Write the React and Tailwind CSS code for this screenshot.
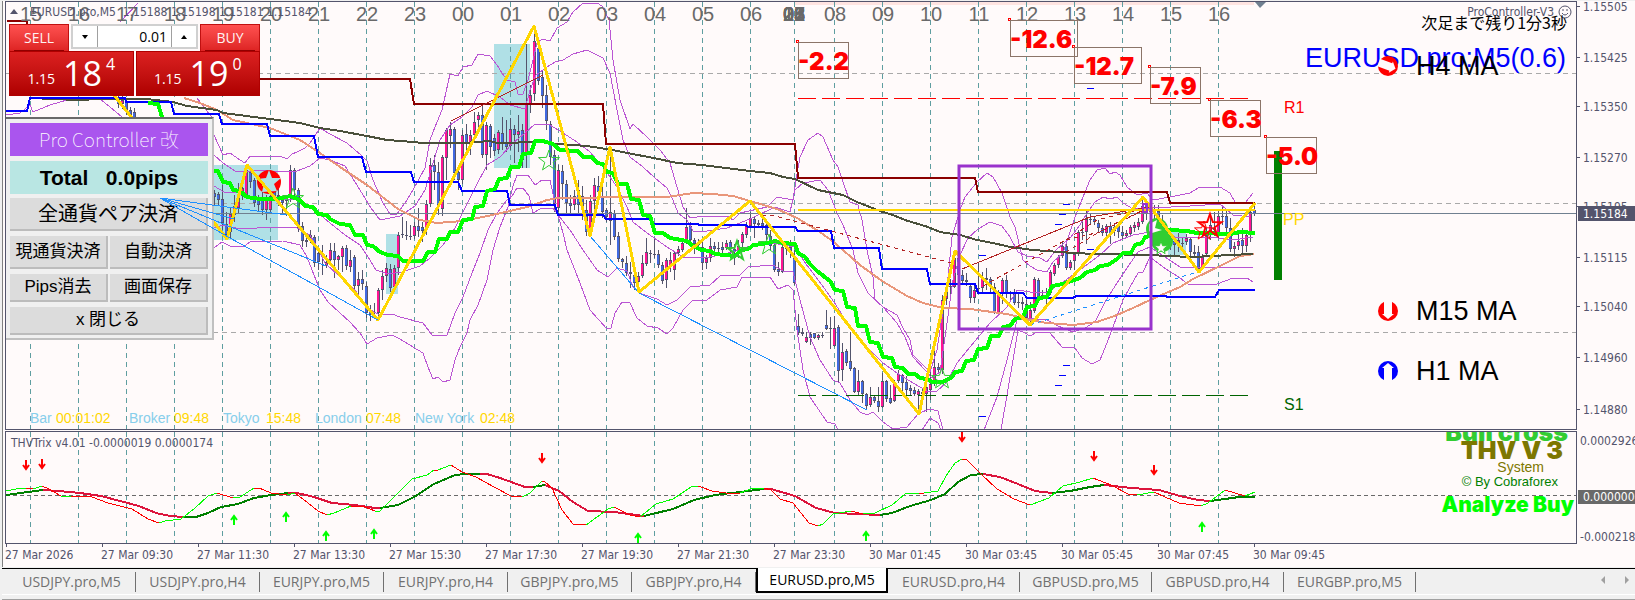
import React, { useState } from "react";

const INK = "#54546c";

const hours = [
  "15", "16", "17", "18", "19", "20", "21", "22", "23",
  "00", "01", "02", "03", "04", "05", "06",
].map((label, i) => ({ label, x: 30 + i * 48 }));
const lateHours = [
  "08", "09", "10", "11", "12", "13", "14", "15", "16",
].map((label, i) => ({ label, x: 834 + i * 48 }));
const gridX = [...hours.map((h) => h.x), 794, ...lateHours.map((h) => h.x)];

// one bar every 4px: [high, open, close, low]
const earlyBars = [
  [95, 98, 104, 108], [96, 104, 100, 109], [98, 102, 110, 115], [107, 110, 117, 120], [108, 112, 122, 126],
];
const bars = [
  [190, 193, 197, 205], [192, 194, 200, 206], [185, 199, 223, 230], [212, 224, 235, 238],
  [208, 232, 214, 238], [195, 215, 206, 222], [183, 208, 195, 214], [178, 196, 188, 200],
  [165, 196, 170, 198], [170, 172, 182, 188], [178, 180, 203, 207], [195, 197, 205, 212],
  [190, 198, 210, 215], [195, 210, 198, 220], [185, 210, 196, 212], [180, 190, 196, 200],
  [184, 195, 197, 206], [198, 200, 203, 215], [195, 201, 200, 216], [165, 198, 170, 202],
  [168, 170, 190, 196], [188, 190, 228, 232], [222, 226, 241, 247], [235, 242, 240, 247],
  [230, 235, 237, 243], [235, 237, 263, 267], [250, 253, 262, 270], [245, 257, 255, 275],
  [255, 265, 262, 268], [243, 260, 250, 264], [243, 251, 260, 278], [255, 260, 256, 270],
  [246, 257, 248, 272], [245, 248, 266, 270], [250, 267, 260, 272], [255, 257, 286, 290],
  [272, 286, 279, 296], [270, 279, 284, 290], [282, 286, 313, 318], [305, 311, 315, 321],
  [303, 312, 312, 317], [288, 313, 290, 316], [270, 290, 276, 300], [263, 276, 268, 282],
  [264, 269, 288, 292], [265, 287, 268, 290], [232, 268, 235, 275], [217, 234, 235, 238],
  [221, 235, 236, 240], [225, 236, 237, 240], [222, 236, 226, 239], [208, 226, 231, 237],
  [222, 227, 231, 242], [200, 229, 204, 235], [158, 204, 165, 207], [155, 165, 172, 190],
  [162, 172, 205, 215], [155, 209, 157, 216], [128, 158, 130, 180], [122, 136, 129, 148],
  [127, 129, 173, 180], [165, 172, 180, 190], [130, 180, 135, 184], [124, 134, 143, 150],
  [130, 143, 135, 155], [112, 135, 122, 140], [112, 120, 115, 128], [105, 115, 155, 158],
  [122, 155, 125, 170], [124, 126, 147, 158], [134, 138, 151, 156], [130, 150, 132, 154],
  [117, 133, 143, 150], [120, 142, 147, 152], [118, 146, 129, 150], [125, 129, 135, 163],
  [115, 135, 131, 152], [124, 130, 160, 168], [44, 155, 104, 168], [85, 104, 95, 113],
  [30, 94, 41, 101], [38, 48, 81, 85], [70, 77, 96, 108], [85, 95, 121, 130],
  [121, 124, 157, 165], [150, 155, 204, 212], [165, 208, 170, 212], [165, 171, 184, 200],
  [180, 184, 203, 215], [195, 203, 206, 216], [190, 205, 196, 210], [180, 190, 205, 213],
  [186, 196, 210, 220], [200, 210, 232, 236], [195, 232, 201, 236], [178, 201, 185, 210],
  [176, 186, 192, 205], [182, 196, 212, 218], [208, 210, 217, 222], [152, 221, 212, 245],
  [210, 213, 237, 240], [232, 236, 259, 262], [258, 259, 262, 268], [256, 263, 273, 276],
  [262, 272, 274, 288], [265, 275, 283, 290], [272, 282, 276, 284], [255, 276, 263, 278],
  [238, 264, 252, 266], [250, 253, 254, 263], [238, 254, 255, 258], [250, 254, 265, 268],
  [262, 265, 281, 284], [258, 280, 260, 288], [252, 267, 260, 272], [252, 270, 253, 280],
  [246, 253, 249, 256], [240, 250, 243, 252], [208, 241, 227, 244], [222, 226, 240, 245],
  [238, 240, 244, 254], [239, 243, 245, 250], [240, 247, 263, 270], [255, 263, 258, 269],
  [238, 258, 246, 262], [242, 246, 249, 252], [242, 248, 248, 254], [242, 247, 250, 255],
  [240, 248, 243, 250], [240, 242, 249, 255], [244, 249, 252, 265], [240, 252, 246, 258],
  [232, 243, 234, 250], [222, 235, 226, 238], [212, 226, 218, 228], [217, 219, 224, 238],
  [220, 223, 225, 228], [218, 223, 226, 230], [222, 225, 235, 240], [230, 236, 246, 250],
  [242, 245, 270, 272], [262, 269, 272, 276], [245, 272, 247, 273], [244, 246, 249, 255],
  [240, 247, 252, 258], [250, 258, 283, 285], [314, 326, 333, 335], [328, 332, 334, 336],
  [332, 342, 337, 343], [332, 334, 338, 345], [333, 333, 338, 339], [334, 338, 335, 340],
  [332, 336, 335, 338], [310, 325, 329, 330], [317, 328, 329, 349], [316, 346, 328, 347],
  [325, 327, 371, 382], [343, 370, 352, 381], [349, 351, 363, 366], [332, 361, 369, 371],
  [367, 368, 392, 393], [370, 392, 381, 395], [380, 381, 394, 403], [393, 394, 406, 410],
  [387, 405, 397, 407], [396, 397, 401, 403], [387, 401, 407, 412], [373, 407, 381, 408],
  [380, 381, 399, 402], [385, 398, 403, 404], [380, 401, 382, 402], [370, 381, 374, 383],
  [374, 375, 383, 392], [376, 382, 390, 399], [385, 388, 391, 395], [387, 390, 394, 396],
  [389, 395, 391, 413], [388, 394, 392, 396], [380, 394, 387, 412], [372, 390, 384, 400],
  [350, 381, 367, 386], [363, 367, 370, 374], [295, 370, 300, 374], [284, 299, 287, 305],
  [279, 287, 286, 297], [253, 287, 258, 288], [255, 258, 275, 280], [270, 275, 281, 284],
  [273, 280, 282, 286], [284, 286, 298, 303], [285, 298, 290, 303], [262, 288, 289, 291],
  [272, 288, 277, 292], [268, 278, 280, 290], [277, 279, 286, 294], [283, 287, 313, 314],
  [290, 314, 293, 316], [278, 293, 280, 304], [275, 280, 293, 298], [291, 292, 294, 302],
  [289, 294, 303, 305], [294, 302, 303, 308], [297, 302, 304, 310], [300, 304, 318, 320],
  [302, 320, 310, 325], [277, 311, 279, 313], [278, 280, 297, 298], [290, 295, 296, 300],
  [288, 296, 295, 305], [270, 293, 272, 295], [263, 274, 265, 276], [255, 265, 257, 268],
  [242, 256, 246, 258], [240, 246, 268, 270], [260, 268, 262, 270], [253, 261, 254, 270],
  [230, 254, 232, 256], [220, 232, 232, 240], [210, 232, 219, 244], [213, 219, 220, 224],
  [216, 219, 222, 225], [220, 223, 228, 232], [225, 228, 233, 236], [224, 233, 226, 238],
  [222, 226, 235, 244], [225, 231, 227, 236], [224, 226, 232, 238], [226, 232, 236, 240],
  [230, 236, 233, 238], [225, 234, 227, 236], [222, 228, 225, 232], [218, 227, 222, 230],
  [198, 222, 206, 224], [200, 203, 208, 220], [206, 208, 212, 218], [205, 212, 209, 228],
  [205, 211, 222, 230], [215, 222, 235, 240], [230, 234, 240, 248], [232, 240, 244, 250],
  [236, 241, 245, 255], [233, 245, 240, 252], [238, 244, 243, 248], [234, 242, 238, 245],
  [238, 239, 252, 256], [245, 252, 254, 258], [246, 252, 269, 272], [254, 268, 257, 270],
  [228, 254, 235, 256], [215, 235, 225, 240], [212, 228, 230, 235], [210, 234, 216, 238],
  [205, 216, 217, 225], [210, 216, 228, 232], [218, 228, 249, 252], [242, 249, 246, 257],
  [230, 246, 241, 250], [228, 240, 246, 254], [230, 246, 235, 252], [206, 235, 212, 242],
  [205, 210, 214, 216],
];

const bands = [
  "214,135 223,155 230,153 240,160 245,163 250,156 280,156 287,159 292,154 297,152 305,148 310,143 320,128 328,133 347,143 362,156 367,161 373,180 383,203 390,214 397,214 407,200 413,190 425,168 430,140 435,127 442,110 450,74 458,76 463,67 472,65 478,54 490,56 497,65 502,73 507,80 515,82 518,94 523,94 528,80 533,60 537,43 542,39 550,41 557,28 567,22 573,12 583,3 597,3 602,6 609,20 613,60 620,100 630,129 633,124 647,137 660,150 670,163 677,187 683,207 690,218 697,217 727,216 733,220 740,213 767,207 777,197 793,200 796,180 800,157 808,140 818,133 823,137 833,160 838,167 843,182 850,202 858,205 862,220 867,250 873,277 875,300 883,307 897,315 903,328 910,340 913,355 923,365 930,372 937,350 943,310 948,277 952,237 960,210 965,197 977,182 987,173 993,177 1002,193 1010,217 1015,227 1023,260 1030,266 1037,270 1047,272 1053,262 1063,253 1070,232 1075,217 1083,197 1090,180 1097,170 1105,168 1110,174 1115,172 1120,175 1127,187 1137,195 1147,193 1153,200 1170,197 1190,193 1198,188 1220,187 1230,193 1235,202 1245,203 1253,193",
  "214,155 223,163 235,171 247,172 262,170 280,172 297,171 310,166 320,158 330,160 345,166 360,190 371,208 380,220 390,218 400,216 415,206 425,190 440,140 450,125 462,117 472,107 478,95 487,91 500,97 510,105 525,109 530,90 536,75 547,67 555,62 563,60 573,54 587,50 603,58 610,73 617,110 623,140 630,157 643,167 655,178 667,188 673,200 678,213 687,220 693,231 707,231 727,228 750,219 775,207 790,212 795,190 803,183 820,180 828,190 837,213 843,225 853,250 858,273 868,293 883,307 897,323 905,337 913,357 925,370 932,378 940,372 946,330 953,280 960,255 968,238 978,229 990,222 1002,226 1010,237 1018,252 1027,256 1040,258 1047,262 1056,250 1070,238 1080,225 1087,213 1095,202 1103,197 1110,199 1117,197 1123,203 1133,209 1153,208 1190,206 1220,204 1233,215 1250,217",
  "214,186 224,192 240,193 260,201 280,200 297,199 312,208 330,223 345,235 360,245 368,257 376,270 388,274 402,272 420,266 430,258 443,245 455,228 463,212 475,188 487,165 500,157 513,143 525,133 535,124 550,125 563,133 577,142 590,152 603,167 617,187 627,207 633,222 647,233 667,247 683,257 710,257 733,252 753,245 773,243 795,247 806,264 822,285 836,305 847,323 863,343 883,363 897,373 913,383 927,391 937,391 947,382 957,363 970,347 980,335 990,323 1007,307 1017,290 1030,292 1047,292 1063,282 1080,270 1100,255 1113,243 1133,235 1150,232 1180,238 1210,237 1233,240 1253,237",
  "214,228 223,225 240,229 257,228 283,227 297,228 310,235 317,247 325,263 340,277 355,290 367,308 378,314 392,314 400,317 423,323 432,335 447,335 455,313 463,297 472,273 480,253 488,230 497,213 507,200 512,196 517,188 523,188 529,196 533,213 540,209 553,208 562,220 570,230 583,250 597,270 608,277 617,268 627,271 633,287 639,293 657,299 667,305 677,300 690,287 710,285 720,276 740,275 748,267 773,265 783,271 793,272 800,300 810,337 820,360 833,380 840,383 850,400 860,412 867,415 873,412 883,422 893,429 907,427 919,413 930,409 938,411 943,430",
  "214,248 222,242 230,246 243,247 250,242 283,241 300,245 307,257 312,270 320,290 328,302 340,313 350,322 360,333 367,344 377,338 392,335 400,339 413,347 423,353 428,367 433,379 438,377 443,382 450,380 455,360 460,347 467,333 470,320 478,305 487,280 493,250 500,227 508,207 513,186 517,175 528,175 535,185 542,180 550,180 556,208 563,233 567,250 580,283 590,310 607,329 611,328 615,313 622,302 630,303 637,318 647,326 658,328 667,334 673,328 683,310 693,300 707,300 720,290 737,287 742,277 770,277 778,289 788,285 793,290 797,330 803,370 810,397 827,422 835,424 838,430",
  "922,430 930,418 938,423 941,430",
  "984,430 997,397 1007,360 1017,320 1027,318 1047,320 1058,326 1073,332 1085,328 1095,322 1105,302 1117,283 1127,268 1138,252 1150,247 1165,257 1180,267 1210,268 1233,267 1253,268",
  "1001,430 1013,360 1018,330 1025,333 1030,336 1037,332 1050,333 1062,347 1075,348 1082,358 1092,364 1100,360 1105,348 1113,327 1123,300 1130,287 1138,273 1143,272 1150,257 1163,267 1180,278 1188,284 1217,284 1233,278 1247,278 1253,282",
  "6,115 20,113 30,105 33,112 50,105 67,100 78,98",
  "100,99 110,107 122,117",
  "120,22 138,3",
  "197,98 206,110 214,120",
];

const lime =
  "148,103 158,104 162,117 214,171 218,171 223,182 230,183 233,190 240,191 247,197 260,199 277,199 290,196 300,200 305,206 313,207 318,214 327,215 330,219 340,224 350,225 355,235 363,235 367,245 373,246 380,252 388,255 398,256 403,261 423,261 428,252 435,252 439,239 447,239 450,232 458,232 463,220 472,219 475,207 483,206 487,191 495,189 499,179 507,178 511,167 519,167 523,154 531,153 535,141 543,141 553,144 560,150 578,151 583,157 592,157 597,163 603,164 607,172 613,173 618,184 627,184 631,199 639,200 643,215 650,216 655,233 663,233 670,238 687,241 693,246 702,250 710,251 715,254 735,256 740,251 750,248 753,245 763,244 775,241 783,243 795,244 798,253 805,257 810,264 817,271 830,281 835,290 843,291 847,307 855,308 858,326 866,326 870,342 878,343 883,357 892,358 895,367 903,368 908,374 915,374 920,378 927,379 932,382 943,382 952,377 955,372 962,371 966,361 974,360 978,349 987,348 991,336 999,336 1003,327 1010,326 1015,319 1023,317 1027,307 1035,306 1039,298 1047,297 1052,286 1063,284 1068,282 1080,278 1087,272 1095,270 1100,266 1108,265 1117,259 1123,253 1131,253 1135,245 1142,243 1145,237 1150,236 1153,232 1170,230 1187,231 1197,233 1230,234 1240,232 1255,233";

const salmon =
  "184,98 200,103 217,110 233,120 270,128 300,140 320,153 340,167 367,185 398,209 420,220 437,223 462,221 483,217 510,211 527,207 547,200 558,198 587,198 613,197 667,197 693,193 713,194 733,196 750,201 777,209 797,218 820,232 835,243 860,265 882,281 907,296 923,303 943,308 970,309 1007,314 1030,320 1047,323 1073,325 1097,322 1117,315 1133,308 1150,300 1180,287 1193,279 1220,266 1240,256 1254,254";

const olive =
  "30,98 78,100 100,99 147,99 173,102 187,106 217,110 223,113 270,119 300,123 320,128 340,131 367,136 387,140 414,142 422,143 463,143 490,141 497,143 540,142 558,144 587,146 613,150 627,153 654,158 677,163 702,165 750,171 770,173 783,177 795,179 818,190 843,195 857,202 880,211 893,215 905,220 928,227 940,232 960,235 977,240 993,243 1010,247 1033,250 1073,253 1097,254 1150,255 1167,256 1193,257 1230,255 1253,254";

const blue =
  "6,111 27,111 30,98 125,98 126,102 171,102 174,114 219,114 222,124 267,124 270,136 314,136 318,157 362,157 366,172 411,172 414,182 458,182 462,191 507,191 510,205 555,205 558,215 603,215 606,219 651,219 654,224 698,224 699,225 746,225 748,227 795,227 798,231 831,231 834,248 879,248 882,269 927,269 930,284 975,284 978,293 1023,293 1027,298 1073,298 1076,296 1165,296 1168,297 1215,297 1219,290 1255,290";

const maroon =
  "7,21 27,21 31,79 410,79 414,104 603,104 606,144 795,144 798,178 975,178 978,192 1167,192 1170,203 1255,203";

const zigzag =
  "110,90 227,239 247,165 378,320 534,26 590,236 610,147 639,292 750,201 919,414 955,251 1030,325 1143,197 1199,272 1255,203";

const pips = [
  { text: "-2.2", x: 798, y: 42, w: 51 },
  { text: "-12.6", x: 1010, y: 20, w: 68 },
  { text: "-12.7", x: 1074, y: 47, w: 68 },
  { text: "-7.9", x: 1150, y: 67, w: 51 },
  { text: "-6.3", x: 1210, y: 100, w: 51 },
  { text: "-5.0", x: 1266, y: 137, w: 51 },
];

const levelMarks = [
  [1087, 88], [1063, 204], [1059, 214], [1055, 224], [979, 255],
  [1087, 249], [1063, 365], [1059, 375], [1055, 385], [979, 416],
];

const sessions = [
  { name: "Bar", time: "00:01:02", x: 30, tx: 56 },
  { name: "Broker", time: "09:48", x: 129, tx: 174 },
  { name: "Tokyo", time: "15:48", x: 223, tx: 266 },
  { name: "London", time: "07:48", x: 315, tx: 366 },
  { name: "New York", time: "02:48", x: 415, tx: 480 },
];

const prices = [
  ["1.15505", 6], ["1.15425", 57], ["1.15350", 106], ["1.15270", 157], ["1.15195", 206],
  ["1.15115", 257], ["1.15040", 306], ["1.14960", 357], ["1.14880", 409],
];

// slow trix, alternating falling / rising pieces
const slowTrix = [
  ["#008000", "6,495 43,490"],
  ["#dc143c", "43,490 59,491 80,493 101,496 120,501 139,506 156,513 170,516 184,517"],
  ["#008000", "184,517 196,517 208,513 221,507 238,504 254,498 271,495 288,493"],
  ["#dc143c", "288,493 297,493 314,497 332,503 354,505 375,508 380,508"],
  ["#008000", "380,508 398,505 414,497 434,484 455,475 466,474 480,474"],
  ["#dc143c", "480,474 487,474 500,478 525,487 533,487"],
  ["#008000", "533,487 545,485"],
  ["#dc143c", "545,485 559,491 573,502 588,511 614,512 644,516"],
  ["#008000", "644,516 673,509 694,500 715,495 740,492 764,489"],
  ["#dc143c", "764,489 771,489 795,496 816,508 835,513 858,514 880,515"],
  ["#008000", "880,515 892,513 910,506 931,500 945,494 958,482 971,475 983,474"],
  ["#dc143c", "983,474 1000,477 1018,484 1035,491 1052,493"],
  ["#008000", "1052,493 1070,491 1090,487 1104,485"],
  ["#dc143c", "1104,485 1132,488 1159,490 1180,496 1198,500 1210,501"],
  ["#008000", "1210,501 1225,499 1239,497 1255,497"],
];

const fastTrix = [
  ["#00ff00", "6,491 16,489 26,488"],
  ["#ff0000", "26,488 33,489"],
  ["#00ff00", "33,489 42,486"],
  ["#ff0000", "42,486 49,489 61,496"],
  ["#00ff00", "61,496 71,496"],
  ["#ff0000", "71,496 92,497 108,503 132,509 148,519 159,523"],
  ["#00ff00", "159,523 165,521 181,519 195,508 208,496 217,493"],
  ["#ff0000", "217,493 233,498"],
  ["#00ff00", "233,498 240,497 254,488"],
  ["#ff0000", "254,488 259,488 271,493 287,495"],
  ["#00ff00", "287,495 295,493"],
  ["#ff0000", "295,493 308,503 318,511 327,515"],
  ["#00ff00", "327,515 334,513 351,506"],
  ["#ff0000", "351,506 365,507 375,511"],
  ["#00ff00", "375,511 380,511 396,495 412,479 427,475 434,470"],
  ["#ff0000", "434,470 438,470"],
  ["#00ff00", "438,470 451,465"],
  ["#ff0000", "451,465 462,472 476,477 494,487 511,496 522,497"],
  ["#00ff00", "522,497 530,493 542,481"],
  ["#ff0000", "542,481 545,482 552,488 562,510 573,524 586,525"],
  ["#00ff00", "586,525 597,517 608,509 614,507"],
  ["#ff0000", "614,507 630,515 640,517"],
  ["#00ff00", "640,517 656,504 673,499 691,487 698,486"],
  ["#ff0000", "698,486 712,491 726,493 740,493"],
  ["#00ff00", "740,493 753,488 764,488"],
  ["#ff0000", "764,488 771,490 780,499 793,503 809,523 818,526"],
  ["#00ff00", "818,526 823,524 833,514 851,511"],
  ["#ff0000", "851,511 863,514"],
  ["#00ff00", "863,514 875,513 892,505 905,494 919,493"],
  ["#ff0000", "919,493 924,493"],
  ["#00ff00", "924,493 938,491 946,476 955,463 962,459"],
  ["#ff0000", "962,459 967,460 981,474 997,489 1014,499 1030,505"],
  ["#00ff00", "1030,505 1049,498 1063,486 1080,482 1093,478"],
  ["#ff0000", "1093,478 1111,485 1128,494 1137,495"],
  ["#00ff00", "1137,495 1154,492"],
  ["#ff0000", "1154,492 1165,497 1179,503 1201,506"],
  ["#00ff00", "1201,506 1208,503 1225,490"],
  ["#ff0000", "1225,490 1245,496"],
  ["#00ff00", "1245,496 1255,492"],
];

const sellArrows = [[26, 465], [42, 464], [542, 458], [962, 437], [1094, 456], [1154, 470]];
const buyArrows = [[234, 520], [286, 517], [326, 536], [374, 534], [638, 538], [866, 536], [1202, 527]];

const dates = [
  "27 Mar 2026", "27 Mar 09:30", "27 Mar 11:30", "27 Mar 13:30", "27 Mar 15:30",
  "27 Mar 17:30", "27 Mar 19:30", "27 Mar 21:30", "27 Mar 23:30", "30 Mar 01:45",
  "30 Mar 03:45", "30 Mar 05:45", "30 Mar 07:45", "30 Mar 09:45",
];

const tabs = [
  { name: "USDJPY.pro,M5", width: "w-32" },
  { name: "USDJPY.pro,H4", width: "w-31" },
  { name: "EURJPY.pro,M5", width: "w-31" },
  { name: "EURJPY.pro,H4", width: "w-31" },
  { name: "GBPJPY.pro,M5", width: "w-31" },
  { name: "GBPJPY.pro,H4", width: "w-31" },
  { name: "EURUSD.pro,M5", width: "w-33" },
  { name: "EURUSD.pro,H4", width: "w-33" },
  { name: "GBPUSD.pro,M5", width: "w-33" },
  { name: "GBPUSD.pro,H4", width: "w-33" },
  { name: "EURGBP.pro,M5", width: "w-33" },
];

function starPoints(cx, cy, r) {
  return Array.from({ length: 10 }, (_, i) => {
    const a = (Math.PI / 5) * i - Math.PI / 2;
    const d = i % 2 ? r * 0.4 : r;
    return `${(cx + d * Math.cos(a)).toFixed(1)},${(cy + d * Math.sin(a)).toFixed(1)}`;
  }).join(" ");
}

function Star({ x, y, r = 11, color = "#32cd32", fill = "none", width = 1 }) {
  return <polygon points={starPoints(x, y, r)} fill={fill} stroke={color} strokeWidth={width} />;
}

function Line({ points, color, width = 1, dash }) {
  return (
    <polyline
      points={points}
      fill="none"
      stroke={color}
      strokeWidth={width}
      strokeDasharray={dash}
      strokeLinejoin="round"
    />
  );
}

function Bar({ x, bar }) {
  const [high, open, close, low] = bar;
  const up = close < open;
  const top = Math.min(open, close);
  const size = Math.abs(open - close);
  return (
    <g>
      <rect x={x} y={high} width="1" height={low - high} fill={INK} />
      <rect x={x - 1} y={top} width="3" height={Math.max(size, 1)} fill={INK} />
      {size > 2 && (
        <rect x={x - 1} y={top + 1} width="2" height={size - 2} fill={up ? "#ff1493" : "#4169e1"} />
      )}
    </g>
  );
}

function Arrow({ x, y, up }) {
  return (
    <path
      d={up ? "M0 5V-4M-3 0L0 -4L3 0" : "M0 -5V4M-3 0L0 4L3 0"}
      transform={`translate(${x} ${y})`}
      fill="none"
      stroke={up ? "#00ff00" : "#ff0000"}
      strokeWidth="2"
    />
  );
}

function TrendDot({ color, angle }) {
  return (
    <svg className="h-5 w-5 shrink-0" viewBox="-10 -10 20 20">
      <circle r="10" fill={color} />
      <path d="M-4 -10V3H-6L0 8L6 3H4V-10Z" fill="#fffafa" transform={`rotate(${angle})`} />
    </svg>
  );
}

function PriceChart() {
  return (
    <svg className="block h-full w-full" role="img" aria-label="EURUSD.pro M5 price chart">
      <g transform="translate(-6 -2)">
        <rect x="795" y="2" width="459" height="3" fill="#ffe4e1" />
        <g fill="#b0e0e6">
          <rect x="214" y="165" width="64" height="75" />
          <rect x="386" y="234" width="12" height="60" />
          <rect x="494" y="44" width="36" height="124" />
          <rect x="1168" y="232" width="18" height="23" />
        </g>
        <g shapeRendering="crispEdges">
          {gridX.map((x) => (
            <line key={x} x1={x + 0.5} x2={x + 0.5} y1="2" y2="430" stroke="#5f9ea0" strokeDasharray="5 4" />
          ))}
          {[73, 203, 332].map((y) => (
            <line key={y} x1="6" x2="1576" y1={y + 0.5} y2={y + 0.5} stroke="#a9a9a9" strokeDasharray="5 4" />
          ))}
          {earlyBars.map((bar, i) => (
            <Bar key={i} x={118 + i * 4} bar={bar} />
          ))}
          {bars.map((bar, i) => (
            <Bar key={i} x={214 + i * 4} bar={bar} />
          ))}
          {bands.map((points) => (
            <Line key={points} points={points} color="#ba55d3" />
          ))}
        </g>
        <rect x="1274" y="151" width="8" height="129" fill="#008000" />
        <rect x="6" y="213" width="1570" height="1" fill="#708090" />
        <g shapeRendering="crispEdges">
          <Line points={salmon} color="#e9967a" width={2} />
          <Line points={olive} color="#4a4f3a" width={2} />
          <Line points={blue} color="#0000ff" width={2} />
          <Line points={maroon} color="#8b0000" width={2} />
          <Line points={lime} color="#00ff00" width={4} />
          <Line points="798,98.5 1248,98.5" color="#ff0000" dash="18 6" />
          <Line points="798,395.5 1248,395.5" color="#006400" dash="18 6" />
          <Line points="590,236 639,293 867,410" color="#1e90ff" />
          <Line points="1030,325 1197,272" color="#1e90ff" dash="4 4" />
          <Line points="451,121 543,75" color="#b22222" />
          <Line points="962,269 1090,217 1150,207" color="#b22222" />
          <Line points="762,215 775,216 955,264" color="#b22222" dash="4 4" />
          <Line points="983,286 1066,240 1097,220 1150,207" color="#b22222" dash="4 4" />
          <Line points="1066,252 1106,228 1150,207" color="#b22222" dash="4 4" />
          <Line points="1066,240 1100,232 1150,207" color="#b22222" dash="4 4" />
          <Line points="798,210 1255,210" color="#ffd700" width={2} />
        </g>
        <Star x={293} y={199} />
        <Star x={549} y={161} />
        <Star x={737} y={251} width={2} r={10} />
        <Star x={769} y={245} />
        <Star x={942} y={379} />
        <circle cx="1157" cy="229" r="11" fill="#32cd32" />
        <circle cx="1162" cy="241" r="11" fill="#32cd32" />
        <path d="M1149 224L1157 220L1155 228L1162 230L1152 233L1149 231Z" fill="#fffafa" />
        <Star x={1161} y={248} r={7} fill="#fffafa" />
        <circle cx="269" cy="182" r="12" fill="#ff0000" />
        <path d="M269 170L272 178L281 178L274 184L277 191L262 192L264 184L257 179L266 178Z" fill="#b0e0e6" />
        <g shapeRendering="crispEdges">
          <Line points={zigzag} color="#ffd700" width={3} />
        </g>
        <Star x={1204} y={231} r={10} color="#ff0000" />
        <Star x={1210} y={226} r={12} color="#ff0000" width={2} />
        {levelMarks.map(([x, y]) => (
          <rect key={`${x}-${y}`} x={x} y={y} width="7" height="1" fill="#0000ff" />
        ))}
        <rect x="959" y="166" width="192" height="163" fill="none" stroke="#9932cc" strokeWidth="3" />
        <rect x="1143" y="204" width="4" height="8" fill="none" stroke="#9932cc" strokeWidth="2" />
        <path d="M1255 2H1266L1260 8Z" fill="#708090" />
        <g fontFamily="'Liberation Sans', sans-serif">
          <g fontSize="20" fill="#696969" textAnchor="middle">
            {[...hours, ...lateHours].map((h) => (
              <text key={h.x} x={h.x + 1} y="21">{h.label}</text>
            ))}
            {/* weekend gap: all closed hours pile up on one grid line */}
            {["07", "22", "01", "23", "06", "05", "04", "13", "21", "18"].map((t) => (
              <text key={t} x="794" y="21">{t}</text>
            ))}
          </g>
          <g fontSize="14">
            {sessions.map((s) => (
              <React.Fragment key={s.name}>
                <text x={s.x} y="423" fill="#87ceeb">{s.name}</text>
                <text x={s.tx} y="423" fill="#ffd700">{s.time}</text>
              </React.Fragment>
            ))}
          </g>
          <g fontSize="16">
            <text x="1284" y="113" fill="#ff0000">R1</text>
            <text x="1283" y="225" fill="#ffd700">PP</text>
            <text x="1284" y="410" fill="#006400">S1</text>
          </g>
        </g>
        {pips.map((p) => (
          <g key={p.text}>
            <rect x={p.x - 1.5} y={p.y - 1.5} width="2" height="2" fill="none" stroke="#ff0000" />
            <rect x={p.x + 0.5} y={p.y + 0.5} width={p.w - 1} height="36" fill="none" stroke="#8b7468" />
            <text x={p.x} y={p.y + 28} fontSize="24" fontWeight="900" fontFamily="Inter, sans-serif" fill="#ff0000">
              {p.text}
            </text>
          </g>
        ))}
      </g>
    </svg>
  );
}

function TrixChart() {
  return (
    <svg className="block h-full w-full" role="img" aria-label="THVTrix oscillator">
      <g transform="translate(-6 -432)">
        <g shapeRendering="crispEdges">
          {gridX.map((x) => (
            <line key={x} x1={x + 0.5} x2={x + 0.5} y1="432" y2="543" stroke="#5f9ea0" strokeDasharray="5 4" />
          ))}
          <line x1="6" x2="1576" y1="495.5" y2="495.5" stroke="#696969" strokeDasharray="4 3" />
          {slowTrix.map(([color, points]) => (
            <Line key={points} points={points} color={color} width={2} />
          ))}
          {fastTrix.map(([color, points]) => (
            <Line key={points} points={points} color={color} />
          ))}
        </g>
        {sellArrows.map(([x, y]) => (
          <Arrow key={x} x={x} y={y} />
        ))}
        {buyArrows.map(([x, y]) => (
          <Arrow key={x} x={x} y={y} up />
        ))}
      </g>
    </svg>
  );
}

function Quote({ big, small, label }) {
  return (
    <button
      type="button"
      aria-label={label}
      className="flex h-[45px] flex-1 items-end justify-center border border-[#b00000] bg-linear-to-b from-[#dc2020] to-[#ae0000] pb-2 text-white"
    >
      <span className="text-sm font-medium leading-4">1.15</span>
      <span className="ml-2 text-[34px] font-medium leading-7">{big}</span>
      <span className="ml-1 self-start pt-1 text-base font-medium leading-4">{small}</span>
    </button>
  );
}

function TradePanel() {
  const [lot, setLot] = useState("0.01");
  const side =
    "w-15 h-7 border border-b-0 border-[#c01010] bg-linear-to-b from-[#ff5050] to-[#dc2020] px-1 text-sm text-red-50";
  return (
    <div className="absolute left-[3px] top-[22px] w-[251px] bg-[#fffafa] font-['Open_Sans',sans-serif]">
      <div className="flex h-[27px] justify-between">
        <button type="button" className={side}>
          <span className="block border-b border-[#900000] leading-6">SELL</span>
        </button>
        <div className="flex h-[25px] w-[127px] border-2 border-[#d0d0d0] bg-white">
          <button type="button" aria-label="Less" className="grid w-6 place-items-center">
            <svg className="h-1 w-1.5" viewBox="0 0 6 4"><path d="M0 0H6L3 4Z" /></svg>
          </button>
          <input
            aria-label="Lots"
            className="min-w-0 flex-1 border-x border-[#a0a0a0] px-1 text-right text-sm text-black"
            value={lot}
            onChange={(e) => setLot(e.target.value)}
          />
          <button type="button" aria-label="More" className="grid w-6 place-items-center">
            <svg className="h-1 w-1.5" viewBox="0 0 6 4"><path d="M0 4H6L3 0Z" /></svg>
          </button>
        </div>
        <button type="button" className={side}>
          <span className="block border-b border-[#900000] leading-6">BUY</span>
        </button>
      </div>
      <div className="flex gap-0.5">
        <Quote big="18" small="4" label="Sell at 1.15184" />
        <Quote big="19" small="0" label="Buy at 1.15190" />
      </div>
    </div>
  );
}

function PanelButton({ className = "", children }) {
  return (
    <button
      type="button"
      className={`border-b-2 border-r-2 border-[#bcbcbc] bg-[#dcdcdc] leading-6 text-black ${className}`}
    >
      {children}
    </button>
  );
}

function ProController() {
  return (
    <div className="absolute left-0 top-[115px] w-52 border-b-2 border-r-2 border-t-2 border-b-[#c0c0c0] border-r-[#c0c0c0] border-t-[#696969] bg-[#f0f0f0] p-1 pb-[3px] font-['Liberation_Sans','Noto_Sans_CJK_JP',sans-serif]">
      <h2 className="h-[33px] bg-[#aa55ee] text-center font-['Noto_Sans_CJK_JP',sans-serif] text-[19px] font-thin leading-8 text-white">
        Pro Controller 改
      </h2>
      <p className="mt-[5px] h-[33px] whitespace-pre bg-[#b9e6e3] text-center text-[21px] font-bold leading-[34px] text-black">
        Total   0.0pips
      </p>
      <div className="mt-1 grid grid-cols-2 gap-x-0.5 gap-y-[5px] text-[17px]">
        <PanelButton className="col-span-2 h-[33px] text-[20px]">全通貨ペア決済</PanelButton>
        <PanelButton className="h-[33px]">現通貨決済</PanelButton>
        <PanelButton className="h-[33px]">自動決済</PanelButton>
        <PanelButton className="h-[28px]">Pips消去</PanelButton>
        <PanelButton className="h-[28px]">画面保存</PanelButton>
        <PanelButton className="col-span-2 h-[28px]">x 閉じる</PanelButton>
      </div>
    </div>
  );
}

function TrendLabel({ className, color, angle, children }) {
  return (
    <div className={`absolute right-[63px] flex w-[135px] items-center gap-[18px] whitespace-nowrap text-[27px] leading-8 text-black ${className}`}>
      <TrendDot color={color} angle={angle} />
      <span>{children}</span>
    </div>
  );
}

function PriceAxis() {
  return (
    <svg className="block h-full w-full" fontSize="12" fill={INK}>
      {prices.map(([label, y]) => (
        <g key={label}>
          <rect x="0" y={y - 1} width="3" height="1" />
          <text x="6" y={y + 4}>{label}</text>
        </g>
      ))}
      <rect x="1" y="205" width="57" height="15" />
      <text x="6" y="217" fill="#ffffff">1.15184</text>
    </svg>
  );
}

export default function App() {
  const [active, setActive] = useState("EURUSD.pro,M5");

  return (
    <div className="overflow-hidden bg-[#f0f0f0] pl-0.5 pt-px font-['DejaVu_Sans_Condensed','DejaVu_Sans',sans-serif] text-xs text-[#54546c]">
      <div className="border-l border-[#808080] bg-[#fffafa] pl-0.5">
        <div className="flex">
          <main className="relative h-[429px] min-w-0 flex-1 overflow-hidden border border-[#54546c]">
            <PriceChart />
            <div className="absolute left-1 top-0 flex items-center gap-3 whitespace-pre leading-5">
              <svg className="h-1.5 w-2" viewBox="0 0 8 6"><path d="M0 5L4 0L8 5Z" fill={INK} /></svg>
              <span>EURUSD.pro,M5  1.15188 1.15198 1.15181 1.15184</span>
            </div>
            <TradePanel />
            <ProController />
            <svg className="pointer-events-none absolute left-0 top-0 h-96 w-96" shapeRendering="crispEdges">
              <g transform="translate(-6 -2)" stroke="#1e90ff">
                <line x1="160" y1="198" x2="287" y2="215" />
                <line x1="160" y1="198" x2="234" y2="219" />
                <line x1="160" y1="198" x2="326" y2="266" />
                <line x1="160" y1="198" x2="230" y2="238" />
                <line x1="230" y1="238" x2="378" y2="320" />
              </g>
            </svg>
            <div className="absolute right-1 top-0 flex items-center gap-1 leading-5">
              <span>ProController-V3</span>
              <svg className="h-3.5 w-3.5" viewBox="0 0 14 14" fill="none" stroke={INK}>
                <circle cx="7" cy="7" r="6" />
                <path d="M4 8Q7 12 10 8M5 4V6M9 4V6" />
              </svg>
            </div>
            <div className="absolute right-[9px] top-2 font-['Noto_Sans_CJK_JP',sans-serif] text-base leading-6 text-black">
              次足まで残り1分3秒
            </div>
            <div className="font-['Liberation_Sans',sans-serif]">
              <div className="absolute right-2.5 top-10 text-[27px] leading-8 text-[#0000ff]">
                EURUSD.pro:M5(0.6)
              </div>
              <TrendLabel className="top-[48px]" color="#ff0000" angle={-70}>H4 MA</TrendLabel>
              <TrendLabel className="top-[293px]" color="#ff0000" angle={0}>M15 MA</TrendLabel>
              <TrendLabel className="top-[353px]" color="#0000ff" angle={180}>H1 MA</TrendLabel>
            </div>
          </main>
          <aside className="h-[429px] w-[58px] shrink-0">
            <PriceAxis />
          </aside>
        </div>

        <div className="mt-px flex">
          <section className="relative h-[113px] min-w-0 flex-1 overflow-hidden border border-[#54546c]">
            <TrixChart />
            <div className="absolute left-[5px] top-px leading-5">
              THVTrix v4.01 -0.0000019 0.0000174
            </div>
            <div className="absolute -top-3 right-2 font-[Inter,sans-serif] text-[25px] font-black leading-6 text-[#32cd32]">
              Bull cross
            </div>
            <div className="absolute right-[13px] top-[6px] font-[Inter,sans-serif] text-[25px] font-black leading-6 text-[#7d7700]">
              THV V 3
            </div>
            <div className="absolute right-8 top-[25px] font-['Liberation_Sans',sans-serif] text-sm leading-5 text-[#7d7700]">
              System
            </div>
            <div className="absolute right-[18px] top-10 font-['Liberation_Sans',sans-serif] text-[13px] leading-5 text-[#008000]">
              © By Cobraforex
            </div>
            <div className="absolute right-0.5 top-[61px] font-[Inter,sans-serif] text-[21px] font-black leading-6 text-[#00ff00]">
              Analyze Buy
            </div>
          </section>
          <aside className="flex h-[113px] w-[58px] shrink-0 flex-col justify-between overflow-hidden whitespace-nowrap leading-[14px]">
            <span className="pl-[3px] pt-[3px]">0.0002926</span>
            <span className="ml-px mt-4 bg-[#696969] pl-[5px] text-white">0.0000000</span>
            <span className="pl-[3px]">-0.0002187</span>
          </aside>
        </div>

        <div className="flex h-[23px]">
          {dates.map((d) => (
            <div key={d} className="w-24 shrink-0 whitespace-nowrap">
              <div className="ml-px h-[3px] w-px bg-[#54546c]" />
              <div className="leading-[17px]">{d}</div>
            </div>
          ))}
        </div>
      </div>

      <nav className="mt-px flex h-[27px] items-stretch border-b border-t border-b-white border-t-black pl-1.5 font-['Open_Sans',sans-serif] text-sm">
        {tabs.map((tab) =>
          tab.name === active ? (
            <button
              key={tab.name}
              type="button"
              className={`-mt-px h-[25px] border-2 border-t-0 border-black bg-white text-black ${tab.width}`}
            >
              {tab.name}
            </button>
          ) : (
            <button
              key={tab.name}
              type="button"
              onClick={() => setActive(tab.name)}
              className={`flex items-center justify-center text-[#707070] ${tab.width}`}
            >
              <span className="flex h-5 flex-1 items-center justify-center border-r border-[#707070]">
                {tab.name}
              </span>
            </button>
          )
        )}
        <div className="ml-auto flex items-center gap-5 pb-1 pr-1.5">
          <button type="button" aria-label="Previous tabs">
            <svg className="h-2 w-1" viewBox="0 0 4 8"><path d="M4 0V8L0 4Z" fill="#a0a0a0" /></svg>
          </button>
          <button type="button" aria-label="Next tabs">
            <svg className="h-2 w-1" viewBox="0 0 4 8"><path d="M0 0V8L4 4Z" fill="#a0a0a0" /></svg>
          </button>
        </div>
      </nav>
      <div className="h-[5px] border-b border-[#a0a0a0]" />
    </div>
  );
}
